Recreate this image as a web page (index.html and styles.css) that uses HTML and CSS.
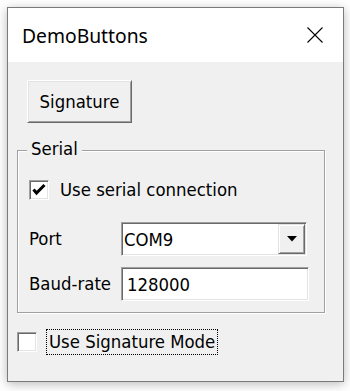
FILE: index.html
```html
<!DOCTYPE html>
<html>
<head>
<meta charset="utf-8">
<link rel="stylesheet" href="styles.css">
</head>
<body>
<div class="window">
  <div class="titlebar">
    <span class="title">DemoButtons</span>
    <svg class="close" width="16" height="16" viewBox="0 0 16 16"><path d="M0.5 0.5 L15.5 15.5 M15.5 0.5 L0.5 15.5" stroke="#000" stroke-width="1.1" fill="none"/></svg>
  </div>
  <div class="client">
    <button class="btn">Signature</button>
    <div class="group">
      <span class="group-title">Serial</span>
      <label class="check-row">
        <span class="checkbox"><svg width="18" height="18" viewBox="0 0 18 18"><path d="M3.5 8.5 L6.5 12 L14.5 4" stroke="#000" stroke-width="3" fill="none"/></svg></span>
        <span class="check-text">Use serial connection</span>
      </label>
      <div class="form-grid">
        <span class="label">Port</span>
        <div class="combo">
          <span class="combo-text">COM9</span>
          <span class="combo-btn"><svg width="10" height="6" viewBox="0 0 10 6"><path d="M0 0 H10 L5 5.5 Z" fill="#000"/></svg></span>
        </div>
        <span class="label">Baud-rate</span>
        <div class="textbox">128000</div>
      </div>
    </div>
    <label class="check-row bottom">
      <span class="checkbox"></span>
      <span class="focus">Use Signature Mode</span>
    </label>
  </div>
</div>
</body>
</html>
```

FILE: styles.css
```css
html, body {
  margin: 0;
  background: #ffffff;
}
body {
  width: 350px;
  height: 391px;
  padding: 7px;
  box-sizing: border-box;
  overflow: hidden;
}
.window {
  width: 337px;
  height: 375px;
  box-sizing: border-box;
  border: 1px solid #7a7a7a;
  box-shadow: 0 2px 10px rgba(0, 0, 0, 0.28);
  display: flex;
  flex-direction: column;
  background: #f0f0f0;
}
.titlebar {
  height: 54px;
  flex: none;
  background: #ffffff;
  display: flex;
  align-items: center;
  justify-content: space-between;
  padding: 0 20px 0 14px;
  font-family: "Noto Sans", "Open Sans", sans-serif;
  font-size: 19.3px;
  color: #000;
}
.title {
  line-height: 24px;
  padding-top: 1px;
}
.close {
  display: block;
}
.client {
  flex: 1;
  padding: 18px 0 0 9px;
  font-family: "DejaVu Sans Condensed", "DejaVu Sans", sans-serif;
  font-stretch: semi-condensed;
  font-size: 18.4px;
  color: #000;
}
.btn {
  display: flex;
  align-items: center;
  justify-content: center;
  width: 105px;
  height: 43px;
  margin: 0 0 0 10px;
  padding: 0 0 1px 0;
  box-sizing: border-box;
  background: #f0f0f0;
  border: 1px solid;
  border-color: #ffffff #696969 #696969 #ffffff;
  box-shadow: inset 1px 1px 0 #e3e3e3, inset -1px -1px 0 #a0a0a0;
  font: inherit;
  color: #000;
}
.group {
  position: relative;
  margin-top: 27px;
  width: 308px;
  height: 163px;
  box-sizing: border-box;
  border: 1px solid #a0a0a0;
  box-shadow: inset 1px 1px 0 #ffffff, 1px 1px 0 #ffffff;
  padding: 29px 15px 0 11px;
}
.group-title {
  position: absolute;
  top: -13px;
  left: 9px;
  padding: 0 4px;
  background: #f0f0f0;
  line-height: 22px;
}
.check-row {
  display: flex;
  align-items: center;
  gap: 11px;
  height: 20px;
}
.checkbox {
  width: 20px;
  height: 20px;
  flex: none;
  box-sizing: border-box;
  background: #ffffff;
  border: 1px solid;
  border-color: #a0a0a0 #ffffff #ffffff #a0a0a0;
  box-shadow: inset 1px 1px 0 #696969, inset -1px -1px 0 #e3e3e3;
  display: flex;
  align-items: center;
  justify-content: center;
}
.checkbox svg {
  display: block;
}
.check-text {
  line-height: 22px;
}
.form-grid {
  margin-top: 22px;
  display: grid;
  grid-template-columns: 92px auto;
  row-gap: 11px;
  align-items: center;
  justify-items: start;
}
.label {
  line-height: 22px;
}
.combo {
  width: 186px;
  height: 34px;
  box-sizing: border-box;
  border: 1px solid;
  border-color: #a0a0a0 #ffffff #ffffff #a0a0a0;
  box-shadow: inset 1px 1px 0 #696969, inset -1px -1px 0 #e3e3e3;
  background: #ffffff;
  padding: 1px;
  display: flex;
  align-items: stretch;
}
.combo-text {
  flex: 1;
  display: flex;
  align-items: center;
  padding-left: 1px;
}
.combo-btn {
  width: 27px;
  box-sizing: border-box;
  background: #f0f0f0;
  border: 1px solid;
  border-color: #e3e3e3 #696969 #696969 #e3e3e3;
  box-shadow: inset 1px 1px 0 #ffffff, inset -1px -1px 0 #a0a0a0;
  display: flex;
  align-items: center;
  justify-content: center;
}
.combo-btn svg {
  display: block;
}
.textbox {
  width: 188px;
  height: 34px;
  box-sizing: border-box;
  border: 1px solid;
  border-color: #a0a0a0 #ffffff #ffffff #a0a0a0;
  box-shadow: inset 1px 1px 0 #696969, inset -1px -1px 0 #e3e3e3;
  background: #ffffff;
  padding-left: 5px;
  display: flex;
  align-items: center;
}
.check-row.bottom {
  margin-top: 19px;
  gap: 9px;
}
.focus {
  border: 1px dotted #000;
  padding: 1px 2px;
  line-height: 22px;
}
```
